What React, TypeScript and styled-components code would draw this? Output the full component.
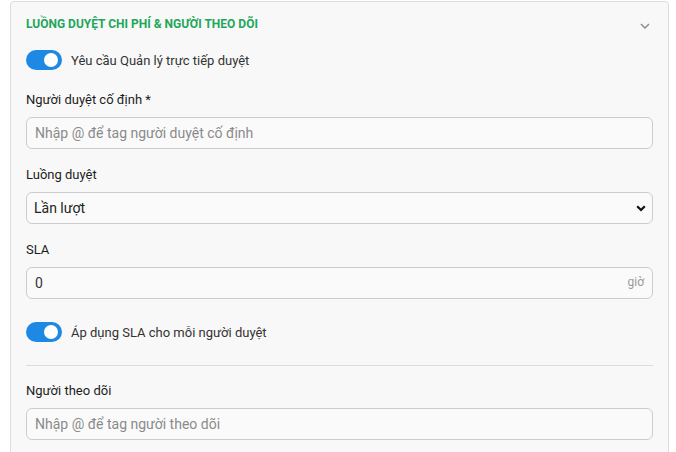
import styled, { createGlobalStyle } from 'styled-components';

const GlobalStyle = createGlobalStyle`
  html, body {
    margin: 0;
    padding: 0;
    background: #ffffff;
    font-family: Roboto, "Noto Sans", "Liberation Sans", sans-serif;
  }
  * {
    box-sizing: border-box;
  }
`;

const Page = styled.div`
  padding: 1px 7px 0 10px;
  height: 452px;
  overflow: hidden;
`;

const Card = styled.section`
  background: #f8f8f8;
  border: 1px solid #dddddd;
  border-radius: 4px;
  padding: 0 15px 30px;
  display: flex;
  flex-direction: column;
`;

const Header = styled.div`
  height: 42px;
  display: flex;
  align-items: center;
  justify-content: space-between;
  padding-top: 2px;
`;

const Title = styled.h2`
  margin: 0;
  font-size: 12px;
  font-weight: 700;
  color: #22a65a;
  text-transform: uppercase;
  letter-spacing: 0;
`;

const Chevron = styled.svg`
  width: 10px;
  height: 6px;
  margin-right: 3px;
  margin-top: 3px;
`;

const ToggleRow = styled.label<{ $top: number }>`
  display: flex;
  align-items: center;
  gap: 9px;
  margin-top: ${(p) => p.$top}px;
  font-size: 13px;
  color: #333333;
  height: 20px;
`;

const Track = styled.span`
  position: relative;
  width: 36px;
  height: 20px;
  border-radius: 10px;
  background: #1e88e5;
  flex-shrink: 0;
`;

const Knob = styled.span`
  position: absolute;
  top: 3px;
  right: 4px;
  width: 14px;
  height: 14px;
  border-radius: 50%;
  background: #ffffff;
`;

const Label = styled.div<{ $top: number }>`
  margin-top: ${(p) => p.$top}px;
  font-size: 13px;
  font-weight: 400;
  line-height: 18px;
  color: #1c1c1c;
`;

const FieldBox = styled.div`
  position: relative;
  margin-top: 8px;
  height: 32px;
`;

const TextInput = styled.input`
  width: 100%;
  height: 32px;
  border: 1px solid #cccccc;
  border-radius: 6px;
  background: #fafafa;
  padding: 0 8px;
  font-family: inherit;
  font-size: 14px;
  color: #333333;
  outline: none;
  &::placeholder {
    color: #8a8a8a;
  }
`;

const Select = styled.select`
  width: 100%;
  height: 32px;
  border: 1px solid #cccccc;
  border-radius: 6px;
  background: #fafafa;
  padding: 0 7px;
  font-family: inherit;
  font-size: 14px;
  color: #222222;
  appearance: none;
  outline: none;
`;

const SelectArrow = styled.svg`
  position: absolute;
  right: 7px;
  top: 13px;
  width: 10px;
  height: 7px;
  pointer-events: none;
`;

const Suffix = styled.span`
  position: absolute;
  right: 9px;
  top: 0;
  height: 32px;
  line-height: 30px;
  font-size: 12px;
  color: #9a9a9a;
`;

const Divider = styled.hr`
  margin: 23px 0 0;
  border: none;
  border-top: 1px solid #dcdcdc;
  height: 0;
`;

function Toggle({ label, top }: { label: string; top: number }) {
  return (
    <ToggleRow $top={top}>
      <Track>
        <Knob />
      </Track>
      {label}
    </ToggleRow>
  );
}

export default function App() {
  return (
    <>
      <GlobalStyle />
      <Page>
        <Card>
          <Header>
            <Title>Luồng duyệt chi phí &amp; người theo dõi</Title>
            <Chevron viewBox="0 0 10 6">
              <path d="M1 1l4 4 4-4" fill="none" stroke="#8a8a8a" strokeWidth="1.4" />
            </Chevron>
          </Header>

          <Toggle label="Yêu cầu Quản lý trực tiếp duyệt" top={6} />

          <Label $top={21}>Người duyệt cố định *</Label>
          <FieldBox>
            <TextInput placeholder="Nhập @ để tag người duyệt cố định" />
          </FieldBox>

          <Label $top={17}>Luồng duyệt</Label>
          <FieldBox>
            <Select defaultValue="seq">
              <option value="seq">Lần lượt</option>
              <option value="par">Đồng thời</option>
            </Select>
            <SelectArrow viewBox="0 0 10 7">
              <path d="M1.2 1.2l3.8 3.8 3.8-3.8" fill="none" stroke="#111111" strokeWidth="2.2" />
            </SelectArrow>
          </FieldBox>

          <Label $top={17}>SLA</Label>
          <FieldBox>
            <TextInput defaultValue="0" />
            <Suffix>giờ</Suffix>
          </FieldBox>

          <Toggle label="Áp dụng SLA cho mỗi người duyệt" top={23} />

          <Divider />

          <Label $top={16}>Người theo dõi</Label>
          <FieldBox>
            <TextInput placeholder="Nhập @ để tag người theo dõi" />
          </FieldBox>
        </Card>
      </Page>
    </>
  );
}
